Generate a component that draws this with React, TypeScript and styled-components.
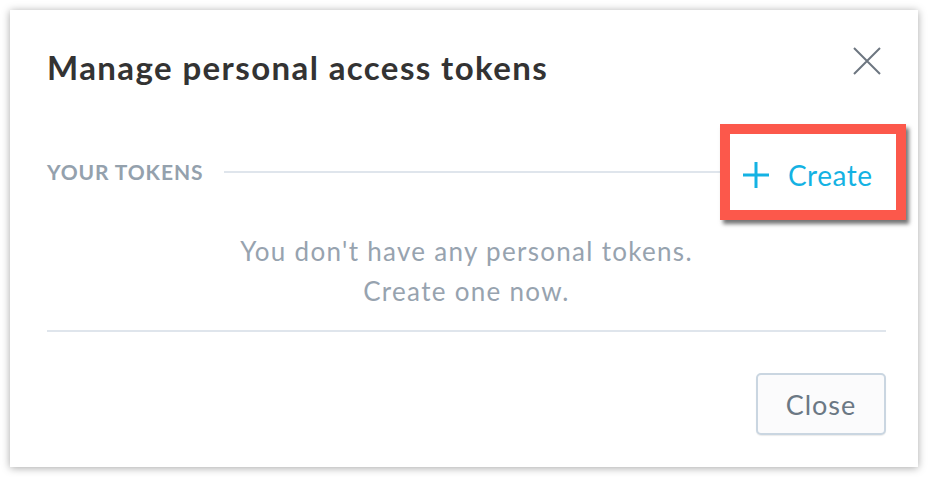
import { createGlobalStyle, styled } from 'styled-components';

const GlobalStyle = createGlobalStyle`
  html, body {
    margin: 0;
    padding: 0;
    background: #ffffff;
  }
  body {
    font-family: Lato, "Open Sans", sans-serif;
  }
`;

const App = () => {
  return (
    <Page>
      <GlobalStyle />
      <Dialog>
        <Header>
          <Title>Manage personal access tokens</Title>
          <CloseIcon aria-label="Close">
            <svg width="28" height="28" viewBox="0 0 28 28">
              <path d="M1 1 L27 27 M27 1 L1 27" stroke="#6d7680" strokeWidth="2" fill="none" />
            </svg>
          </CloseIcon>
        </Header>
        <SectionRow>
          <SectionLabel>YOUR TOKENS</SectionLabel>
          <SectionLine />
          <CreateButton>
            <svg width="26" height="26" viewBox="0 0 26 26">
              <path d="M13 0 V26 M0 13 H26" stroke="#14b2e3" strokeWidth="3" fill="none" />
            </svg>
            <span>Create</span>
          </CreateButton>
        </SectionRow>
        <EmptyText>
          You don't have any personal tokens.
          <br />
          Create one now.
        </EmptyText>
        <Divider />
        <Footer>
          <SecondaryButton>Close</SecondaryButton>
        </Footer>
      </Dialog>
    </Page>
  );
};

export default App;

const Page = styled.div`
  padding: 10px;
`;

const Dialog = styled.section`
  box-sizing: border-box;
  width: 908px;
  height: 457px;
  padding: 37px 32px 0 37px;
  background: #ffffff;
  box-shadow: 0 1px 8px rgba(0, 0, 0, 0.35);
`;

const Header = styled.header`
  display: flex;
  align-items: flex-start;
  justify-content: space-between;
  height: 76px;
`;

const Title = styled.h1`
  margin: 0;
  font-size: 33px;
  line-height: 40px;
  font-weight: 700;
  letter-spacing: 1.4px;
  color: #333333;
`;

const CloseIcon = styled.button`
  display: flex;
  margin: 0 5px 0 0;
  padding: 0;
  border: 0;
  background: none;
`;

const SectionRow = styled.div`
  display: flex;
  align-items: center;
  height: 98px;
  margin-right: -20px;
`;

const SectionLabel = styled.h2`
  margin: 0;
  font-size: 21px;
  line-height: 24px;
  font-weight: 700;
  letter-spacing: 0.9px;
  color: #94a1ad;
`;

const SectionLine = styled.div`
  flex: 1;
  height: 2px;
  margin-left: 21px;
  background: #dfe5ec;
`;

const CreateButton = styled.button`
  box-sizing: border-box;
  display: flex;
  align-items: center;
  gap: 19px;
  width: 186px;
  height: 96px;
  padding: 5px 0 0 13px;
  border: 10px solid #fc584b;
  background: #ffffff;
  box-shadow: 3px 4px 4px rgba(0, 0, 0, 0.55);
  font-family: Lato, sans-serif;
  font-size: 28px;
  letter-spacing: 0.5px;
  color: #14b2e3;
  cursor: pointer;
`;

const EmptyText = styled.p`
  box-sizing: border-box;
  margin: 0;
  padding-top: 10px;
  height: 109px;
  text-align: center;
  font-size: 26px;
  line-height: 40px;
  letter-spacing: 1.3px;
  color: #97a3af;
`;

const Divider = styled.hr`
  margin: 0;
  border: 0;
  height: 2px;
  background: #dfe5ec;
`;

const Footer = styled.footer`
  display: flex;
  justify-content: flex-end;
  padding-top: 41px;
`;

const SecondaryButton = styled.button`
  width: 130px;
  height: 62px;
  border: 2px solid #cad6e1;
  border-radius: 5px;
  background: #fbfbfc;
  box-shadow: 0 1px 1px rgba(0, 0, 0, 0.08);
  font-family: Lato, sans-serif;
  font-size: 27px;
  letter-spacing: 1px;
  color: #6b7884;
  cursor: pointer;
`;
